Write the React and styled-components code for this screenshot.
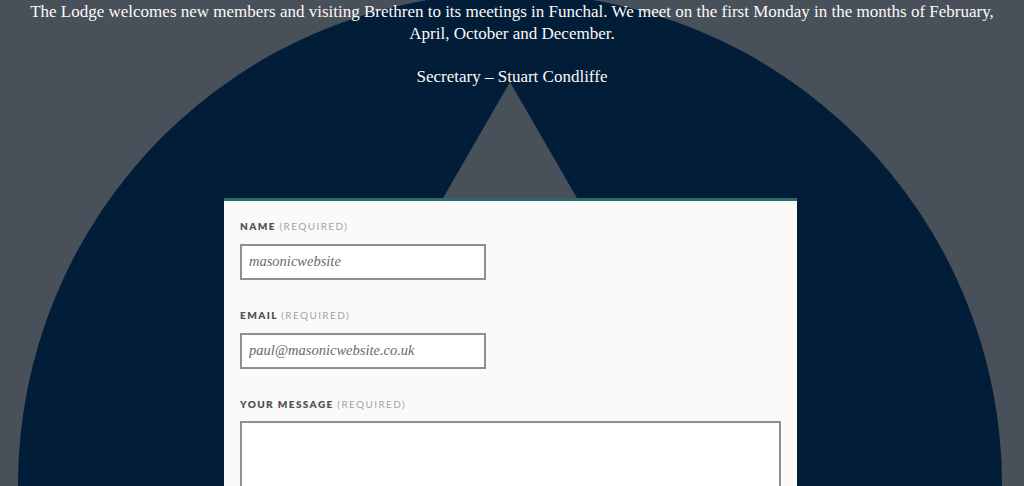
import React from "react";
import styled, { createGlobalStyle } from "styled-components";

const GlobalStyle = createGlobalStyle`
  html, body {
    margin: 0;
    padding: 0;
    background: #48505a;
    overflow: hidden;
  }
`;

const Page = styled.div`
  position: relative;
  width: 1024px;
  height: 486px;
  overflow: hidden;
  background: #48505a;
`;

const Backdrop = styled.svg`
  position: absolute;
  left: 0;
  top: 0;
  z-index: 0;
`;

const Content = styled.div`
  position: relative;
  z-index: 1;
  display: flex;
  flex-direction: column;
  align-items: center;
  padding-top: 1px;
`;

const Intro = styled.div`
  width: 975px;
  text-align: center;
  color: #fbfaf7;
  font-family: "Liberation Serif", "DejaVu Serif", serif;
  font-size: 17px;
  line-height: 21.5px;

  p {
    margin: 0 0 21.5px;
  }
`;

const Card = styled.form`
  width: 541px;
  margin-top: 89px;
  margin-right: 3px;
  padding: 18px 16px 40px;
  background: #fbfaf9;
  border-top: 3px solid #2b6a6b;
  display: flex;
  flex-direction: column;
`;

const Field = styled.div`
  display: flex;
  flex-direction: column;
  margin-bottom: 28px;
`;

const Label = styled.label`
  font-family: "Lato", "Liberation Sans", sans-serif;
  font-size: 10px;
  font-weight: 800;
  letter-spacing: 1.4px;
  text-transform: uppercase;
  color: #505256;
  line-height: 14px;
  margin-bottom: ${(p) => p.$gap || "11px"};
`;

const Required = styled.span`
  font-weight: 400;
  color: #a3a3a3;
`;

const Input = styled.input`
  box-sizing: border-box;
  width: 246px;
  height: 36px;
  padding: 0 7px;
  border: 2px solid #8f8f8f;
  background: #ffffff;
  font-family: "Liberation Serif", "DejaVu Serif", serif;
  font-style: italic;
  font-size: 14.5px;
  color: #6a6a6a;
  outline: none;
`;

const TextArea = styled.textarea`
  box-sizing: border-box;
  width: 541px;
  height: 120px;
  border: 2px solid #8f8f8f;
  background: #ffffff;
  resize: none;
  outline: none;
`;

function Background() {
  const cx = 510;
  const apexY = 82;
  const side = 400;
  const h = (side * Math.sqrt(3)) / 2;
  return (
    <Backdrop width="1024" height="486" viewBox="0 0 1024 486">
      <circle cx={cx} cy={485} r={492} fill="#011d38" />
      <polygon
        points={`${cx},${apexY} ${cx - side / 2},${apexY + h} ${cx + side / 2},${apexY + h}`}
        fill="#48505a"
      />
    </Backdrop>
  );
}

export default function App() {
  return (
    <>
      <GlobalStyle />
      <Page>
        <Background />
        <Content>
          <Intro>
            <p>
              The Lodge welcomes new members and visiting Brethren to its meetings in Funchal. We meet on the
              first Monday in the months of February, April, October and December.
            </p>
            <p>Secretary – Stuart Condliffe</p>
          </Intro>
          <Card onSubmit={(e) => e.preventDefault()}>
            <Field>
              <Label>
                Name <Required>(required)</Required>
              </Label>
              <Input defaultValue="masonicwebsite" />
            </Field>
            <Field>
              <Label>
                Email <Required>(required)</Required>
              </Label>
              <Input defaultValue="paul@masonicwebsite.co.uk" />
            </Field>
            <Field>
              <Label $gap="10px">
                Your Message <Required>(required)</Required>
              </Label>
              <TextArea />
            </Field>
          </Card>
        </Content>
      </Page>
    </>
  );
}
